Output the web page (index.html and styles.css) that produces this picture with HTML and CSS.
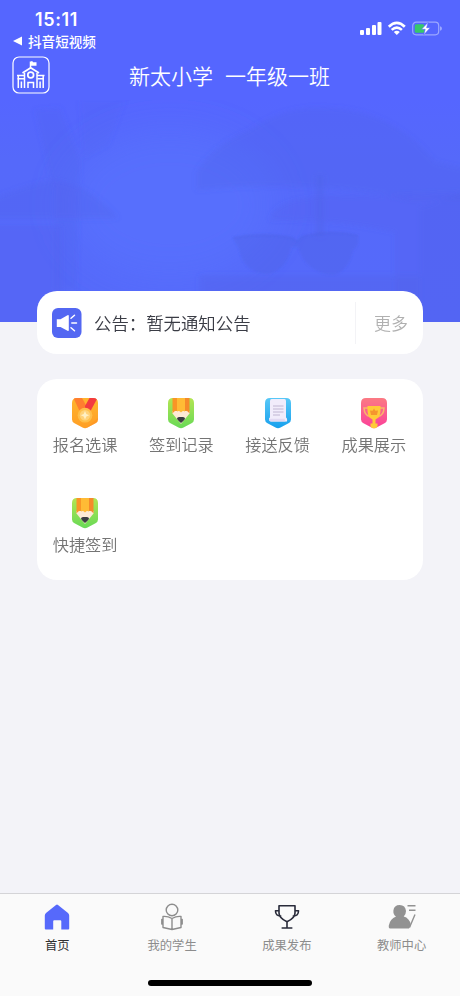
FILE: index.html
```html
<!DOCTYPE html>
<html lang="zh-CN">
<head>
<meta charset="utf-8">
<meta name="viewport" content="width=device-width, initial-scale=1">
<title>新太小学</title>
<link rel="stylesheet" href="styles.css">
</head>
<body>
<svg class="defs" width="0" height="0" aria-hidden="true">
  <defs>
    <linearGradient id="green" x1="0" y1="0" x2="0" y2="1"><stop offset="0" stop-color="#b3e552"/><stop offset="1" stop-color="#66d957"/></linearGradient>
    <linearGradient id="orange" x1="0" y1="0" x2="0" y2="1"><stop offset="0" stop-color="#ffb52e"/><stop offset="1" stop-color="#ff9e25"/></linearGradient>
    <linearGradient id="blue" x1="0" y1="0" x2="0" y2="1"><stop offset="0" stop-color="#58c8f7"/><stop offset="1" stop-color="#169fed"/></linearGradient>
    <linearGradient id="pink" x1="0" y1="0" x2="0" y2="1"><stop offset="0" stop-color="#fb7a83"/><stop offset="1" stop-color="#fb3f9b"/></linearGradient>
    <clipPath id="shield"><path d="M5 0H21Q26 0 26 5V21.500Q26 24 23.500 25.300L15.500 29.600Q13 31 10.500 29.600L2.500 25.300Q0 24 0 21.500V5Q0 0 5 0Z"/></clipPath>
    <symbol id="pencil" viewBox="0 0 26 31">
      <g clip-path="url(#shield)">
        <rect width="26" height="31" fill="url(#green)"/>
        <path d="M4.500 13H21.500V15.500L13 26L4.500 15.500Z" fill="#fde9d6"/>
        <path d="M4.500 0H9V13Q6.500 12.200 4.500 15.500Z" fill="#f99526"/>
        <path d="M9 0H17V13.500Q15 12.200 13 14.500Q11 12.200 9 13.500Z" fill="#ffbb35"/>
        <path d="M17 0H21.500V15.500Q19.500 12.200 17 13Z" fill="#f58a2a"/>
        <path d="M9 20.500Q9.200 19 11 19H15Q16.800 19 17 20.500Q17 21.800 13 25Q9 21.800 9 20.500Z" fill="#3b3d42"/>
      </g>
    </symbol>
  </defs>
</svg>
<div class="screen">
  <header class="hero">
    <svg class="scene" viewBox="0 0 460 222" aria-hidden="true">
      <defs><filter id="soft"><feGaussianBlur stdDeviation="2.500"/></filter>
      <filter id="edge"><feGaussianBlur stdDeviation=".8"/></filter>
      <filter id="haze" x="-30%" y="-30%" width="160%" height="160%"><feGaussianBlur stdDeviation="18"/></filter></defs>
      <g filter="url(#haze)" fill="#5873ff"><ellipse cx="170" cy="105" rx="105" ry="75" opacity=".6"/></g>
      <g filter="url(#soft)" fill="#5060e6">
        <path d="M197 90V72Q212 46 250 30Q285 5 325 8Q390 8 435 62L470 70V100H410Q310 78 197 90Z" opacity=".26"/>
        <path d="M316 75H324V136H316Z" opacity=".35"/>
        <path d="M270 120Q275 92 370 96L470 92V232H395V132Q330 118 270 120Z" opacity=".22"/>
        <path d="M-10 100Q30 84 54 80Q88 84 118 118H-10Z" opacity=".26"/>
        <path d="M35 10L60 8L80 60L76 190H54V90Z" opacity=".17"/>
        <path d="M-10 126H62V232H-10Z" opacity=".22"/>
        <path d="M80 0H125L108 45L83 58Z" opacity=".1"/>
        <path d="M200 176H420V232H200Z" opacity=".32"/>
        <path d="M420 108L470 90V232H420Z" opacity=".22"/>
      </g>
      <g filter="url(#edge)">
        <path d="M233 138Q264 132 292 138L297 142L302 137Q330 129 358 136Q359 147 353 150Q348 172 333 175Q306 173 298 147L291 147Q287 170 268 174Q243 173 239 148Z" fill="#4d60e3" opacity=".32"/>
        <path d="M233 138Q264 132 292 138L297 142L302 137Q330 129 358 136" fill="none" stroke="#4b5ede" stroke-width="1.500" opacity=".4"/>
      </g>
    </svg>
    <div class="status">
      <div class="status-left">
        <div class="time">15:11</div>
        <div class="back"><svg width="10" height="10" viewBox="0 0 10 10"><path d="M0 5L9 .5V9.500Z" fill="#fff"/></svg><span>抖音短视频</span></div>
      </div>
      <svg class="indicators" width="82" height="16" viewBox="0 0 82 16" fill="#fff">
        <rect x="0" y="9" width="4" height="5" rx="1"/><rect x="6" y="7" width="4" height="7" rx="1"/><rect x="12" y="4" width="4" height="10" rx="1"/><rect x="17.500" y="1" width="4" height="13" rx="1"/>
        <path d="M28.800 5.700Q36.800-2 44.800 5.700" fill="none" stroke="#fff" stroke-width="2.700"/>
        <path d="M31.700 8.900Q36.800 4.300 41.900 8.900" fill="none" stroke="#fff" stroke-width="2.600"/>
        <path d="M33.800 10.900Q36.800 8.700 39.800 10.900L36.800 14Z"/>
        <rect x="52.700" y="1.200" width="26" height="12.600" rx="3.500" fill="none" stroke="#9ca8ff" stroke-width="1.200"/>
        <path d="M80 5.200Q82 5.500 82 7.500T80 9.800Z" fill="#9ca8ff"/>
        <rect x="54.800" y="3.200" width="9.500" height="8.600" rx="1.500" fill="#36c86a"/>
        <path d="M68.200 1.200L61.500 8.300H65.200L63.800 13.800L70.300 6.700H66.600Z" stroke="#5566fd" stroke-width=".6"/>
      </svg>
    </div>
    <div class="titlebar">
      <svg class="school" width="38" height="38" viewBox="0 0 38 38" fill="none" stroke="#fff">
        <rect x="1" y="1" width="36" height="36" rx="6" stroke-width="1.200"/>
        <path d="M18.500 12V5.500" stroke-width="1.500"/><path d="M19 5.300H20.500L21 6.300H24.500V9.800H19Z" fill="#fff" stroke="none"/>
        <path d="M10.500 17L18.700 11.800L27 17" stroke-width="1.800"/>
        <circle cx="18.700" cy="19" r="2.900" stroke-width="1.700"/>
        <path d="M5 19.500H12.500M25 19.500H32.500M5.500 22.800H12M25.500 22.800H32" stroke-width="1.600"/>
        <path d="M12.500 17V32M25 17V32M6.300 19V32M31.200 19V32M9.400 25.500V32M28.100 25.500V32" stroke-width="1.500"/>
        <path d="M16 32V26.500H21.500V32" stroke-width="1.500"/>
      </svg>
      <h1><span>新太小学</span><span>一年级一班</span></h1>
    </div>
  </header>
  <main>
    <section class="notice">
      <svg class="horn" width="30" height="30" viewBox="0 0 30 30">
        <rect width="29.500" height="30" rx="6" fill="#5367f2"/>
        <path d="M4.800 11.200H8.500L15.500 7.300Q16.800 6.700 16.800 8V22Q16.800 23.300 15.500 22.700L8.500 19H4.800Z" fill="#fff"/>
        <path d="M19 10.300L22.500 7.300M19.800 15H24.500M19 19.700L22.500 22.700" stroke="#fff" stroke-width="1.500" stroke-linecap="round"/>
      </svg>
      <p>公告：暂无通知公告</p>
      <a class="more">更多</a>
    </section>
    <section class="apps">
      <a class="app"><svg viewBox="0 0 26 31"><g clip-path="url(#shield)"><rect width="26" height="31" fill="url(#orange)"/><path d="M1.500 0H10L15 9L8 14Z" fill="#ff7e2f"/><path d="M13 8L17.500 0H25.500L18.500 13L13 11Z" fill="#f33b3f"/><path d="M13 31L26 20V31Z" fill="#ff9022" opacity=".5"/></g><circle cx="13" cy="17.200" r="7.400" fill="#ffbf4a"/><circle cx="13" cy="17.200" r="5.200" fill="#ffd27a"/><path d="M13 13L14.300 15.900L17.200 17.200L14.300 18.500L13 21.400L11.700 18.500L8.800 17.200L11.700 15.900Z" fill="#fff0c4"/></svg><span>报名选课</span></a>
      <a class="app"><svg viewBox="0 0 26 31"><use href="#pencil"/></svg><span>签到记录</span></a>
      <a class="app"><svg viewBox="0 0 26 31"><g clip-path="url(#shield)"><rect width="26" height="31" fill="url(#blue)"/></g><path d="M6.500 1H19.500Q21 1 21 3V19.500Q22.500 20 22 23.500H6Q3.800 23.500 4 20.500Q5 20 5 18V3Q5 1 6.500 1Z" fill="#f1ecfb"/><path d="M7.500 20.800H19.500L20.500 23.500H6Q4.300 23.500 4 21Z" fill="#e1d9f2"/><path d="M8 8H18.500M8 11H18.500M8 14H18.500M8 17H15" stroke="#c0b6d2" stroke-width="1"/></svg><span>接送反馈</span></a>
      <a class="app"><svg viewBox="0 0 26 31"><g clip-path="url(#shield)"><rect width="26" height="31" fill="url(#pink)"/></g><path d="M7 10H3Q3.300 17.500 9 18.500M19 10H23Q22.700 17.500 17 18.500" fill="none" stroke="#f9b66b" stroke-width="1.500"/><path d="M6.500 8H19.500Q20 16.500 17.500 19.500L14.500 21.500V25.500H16.500V28.700L14.500 30.300H11.500L9.500 28.700V25.500H11.500V21.500L8.500 19.500Q6 16.500 6.500 8Z" fill="#ffcb38"/><path d="M13 10.500L14.400 12.800L17 12.500L16 17H10L9 12.500L11.600 12.800Z" fill="#f5952e"/></svg><span>成果展示</span></a>
      <a class="app"><svg viewBox="0 0 26 31"><use href="#pencil"/></svg><span>快捷签到</span></a>
    </section>
  </main>
  <footer>
    <nav class="tabs">
      <a class="tab active"><svg width="28" height="28" viewBox="0 0 28 28"><path d="M13 2Q14 1.100 15 2L25 10Q26.200 11 26.200 12.500V25.500Q26.200 26.500 25.200 26.500H18.300V18.200Q18.300 17.200 17.300 17.200H11.200Q10.200 17.200 10.200 18.200V26.500H2.800Q1.800 26.500 1.800 25.500V12.500Q1.800 11 3 10Z" fill="#5669fb"/></svg><span>首页</span></a>
      <a class="tab"><svg width="28" height="28" viewBox="0 0 28 28" fill="none" stroke="#8d8d8d" stroke-width="1.400" stroke-linejoin="round"><circle cx="14" cy="7" r="5.800"/><path d="M14 15.500Q9.500 13 5 13.500V24.500L14 26.500L23 24.500V13.500Q18.500 13 14 15.500ZM14 15.500V26.300M5 16.500H3.800V21H5M23 16.500H24.200V21H23"/></svg><span>我的学生</span></a>
      <a class="tab"><svg width="28" height="28" viewBox="0 0 28 28" fill="none" stroke="#292b3a" stroke-width="1.600" stroke-linecap="round" stroke-linejoin="round"><path d="M6 2.700H22V10Q22 15 14 18.800Q6 15 6 10ZM5.800 7.700H2.500Q2.500 13.200 7.700 13M22.200 7.700H25.500Q25.500 13.200 20.300 13M14 19V25M9.200 25H18.800"/></svg><span>成果发布</span></a>
      <a class="tab"><svg width="28" height="28" viewBox="0 0 28 28"><path d="M8 13.500Q5 11.500 5.400 7.500Q6 2 11.700 2T18 8Q18 11.500 15.700 13.500Q21.500 15 23 22L21 25.500H2Q.5 25.500.8 22.500Q2 15.800 8 13.500Z" fill="#929292"/><path d="M19.500 2.700H27.500M21 7.200H27.500M27 11.500L21.500 24.500" stroke="#929292" stroke-width="1.400" fill="none"/></svg><span>教师中心</span></a>
    </nav>
    <div class="home-indicator"></div>
  </footer>
</div>
</body>
</html>
```
FILE: styles.css
```css
* { box-sizing: border-box; }
body {
  margin: 0;
  font-family: "Noto Sans CJK SC", sans-serif;
  background: #f3f3f8;
}
.defs { position: absolute; }
.screen {
  width: 460px;
  height: 996px;
  display: flex;
  flex-direction: column;
  overflow: hidden;
}
.hero {
  position: relative;
  height: 322px;
  flex: none;
  background: linear-gradient(#5566ff 0, #5566ff 100px, #5569fa 160px, #556afa);
  color: #fff;
}
.scene {
  position: absolute;
  left: 0;
  bottom: 0;
  width: 460px;
  height: 222px;
}
.status {
  position: relative;
  display: flex;
  justify-content: space-between;
  height: 56px;
  padding: 10px 18px 0 13px;
}
.time {
  padding-left: 22px;
  font: 600 18px/20px Inter, sans-serif;
  letter-spacing: 0.6px;
}
.back {
  display: flex;
  align-items: center;
  gap: 5px;
  margin-top: 2px;
  font-size: 13.6px;
  line-height: 18px;
  font-weight: 500;
}
.indicators { margin-top: 11px; }
.titlebar {
  position: relative;
  display: flex;
  align-items: center;
  height: 38px;
  padding-left: 12px;
}
h1 {
  display: flex;
  gap: 12px;
  margin: -1px 0 0 79px;
  font-size: 21px;
  line-height: 30px;
  font-weight: 350;
}
main {
  position: relative;
  flex: 1;
  padding: 0 37px;
  margin-top: -31px;
}
.notice {
  display: flex;
  align-items: center;
  height: 63px;
  padding-left: 15px;
  border-radius: 20px;
  background: #fff;
}
.notice p {
  flex: 1;
  margin: 0 0 0 12px;
  font-size: 17.4px;
  line-height: 26px;
  font-weight: 350;
  color: #3a3c45;
}
.more {
  width: 68px;
  height: 42px;
  padding-left: 18px;
  border-left: 1px solid #f3f3f6;
  font-size: 17px;
  line-height: 41px;
  font-weight: 350;
  color: #b0b0b0;
}
.apps {
  display: grid;
  grid-template-columns: repeat(4, 1fr);
  grid-auto-rows: 100px;
  height: 201px;
  margin-top: 25px;
  padding: 19px 1px 0 0;
  border-radius: 20px;
  background: #fff;
}
.app {
  display: flex;
  flex-direction: column;
  align-items: center;
  font-size: 16.2px;
  line-height: 24px;
  font-weight: 350;
  color: #747474;
}
.app svg {
  width: 26px;
  height: 31px;
  margin-bottom: 3px;
}
footer {
  height: 103px;
  border-top: 1px solid #d4d4d7;
  background: #fafafa;
}
.tabs {
  display: grid;
  grid-template-columns: repeat(4, 1fr);
  height: 86px;
  padding: 9px 1px 0 0;
}
.tab {
  display: flex;
  flex-direction: column;
  align-items: center;
  font-size: 12.3px;
  line-height: 18px;
  color: #8c8c8c;
}
.tab svg { margin-bottom: 5px; }
.active { color: #303030; }
.home-indicator {
  width: 164px;
  height: 6px;
  margin: 0 auto;
  border-radius: 3px;
  background: #000;
}
```
